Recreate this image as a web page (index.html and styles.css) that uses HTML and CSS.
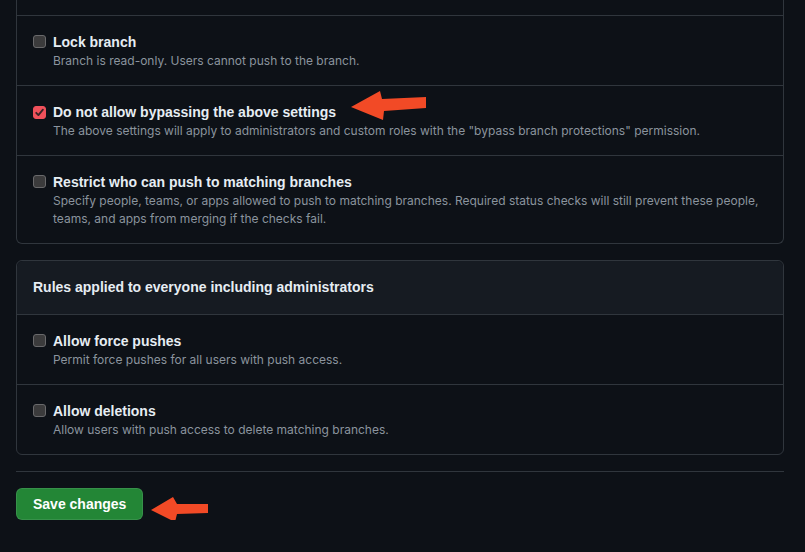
FILE: index.html
```html
<!DOCTYPE html>
<html lang="en">
<head>
<meta charset="utf-8">
<title>Branch protection</title>
<link rel="stylesheet" href="styles.css">
</head>
<body>
<main class="page">
  <section class="box box-cut">
    <div class="row row-tail"></div>
    <div class="row">
      <span class="cb"></span>
      <div class="opt">
        <div class="opt-title">Lock branch</div>
        <div class="opt-desc">Branch is read-only. Users cannot push to the branch.</div>
      </div>
    </div>
    <div class="row">
      <span class="cb cb-on"><svg viewBox="0 0 13 13" width="13" height="13"><path d="M3.2 6.8 L5.4 9.1 L9.9 3.6" fill="none" stroke="#3a2326" stroke-width="1.8" stroke-linecap="round" stroke-linejoin="round"/></svg></span>
      <div class="opt">
        <div class="opt-title">Do not allow bypassing the above settings</div>
        <div class="opt-desc">The above settings will apply to administrators and custom roles with the "bypass branch protections" permission.</div>
      </div>
    </div>
    <div class="row">
      <span class="cb"></span>
      <div class="opt">
        <div class="opt-title">Restrict who can push to matching branches</div>
        <div class="opt-desc">Specify people, teams, or apps allowed to push to matching branches. Required status checks will still prevent these people, teams, and apps from merging if the checks fail.</div>
      </div>
    </div>
  </section>

  <section class="box">
    <header class="box-head">Rules applied to everyone including administrators</header>
    <div class="row">
      <span class="cb"></span>
      <div class="opt">
        <div class="opt-title">Allow force pushes</div>
        <div class="opt-desc">Permit force pushes for all users with push access.</div>
      </div>
    </div>
    <div class="row">
      <span class="cb"></span>
      <div class="opt">
        <div class="opt-title">Allow deletions</div>
        <div class="opt-desc">Allow users with push access to delete matching branches.</div>
      </div>
    </div>
  </section>

  <hr class="sep">

  <div class="actions">
    <button class="btn-primary" type="button">Save changes</button>
  </div>

  <svg class="arrow arrow-1" width="80" height="32" viewBox="0 0 80 32"><polygon points="0,16 29,0 31,8 75,6 75,17 33,20 32,29" fill="#f24a26"/></svg>
  <svg class="arrow arrow-2" width="60" height="26" viewBox="0 0 60 26"><polygon points="0,13 22,0 26,7 57,7 57,16 26,17 24,25" fill="#f24a26"/></svg>
</main>
</body>
</html>
```

FILE: styles.css
```css
* { box-sizing: border-box; }
html, body {
  margin: 0;
  background: #0d1117;
}
body {
  font-family: "Liberation Sans", Arial, sans-serif;
  color: #e6edf3;
  font-size: 14px;
}
.page {
  position: relative;
  width: 768px;
  margin-left: 16px;
}
.box {
  border: 1px solid #30363d;
  border-radius: 6px;
  margin-bottom: 16px;
}
.box-cut {
  border-top: none;
  border-top-left-radius: 0;
  border-top-right-radius: 0;
}
.row {
  display: flex;
  align-items: flex-start;
  gap: 7px;
  padding: 16px 16px 15px;
  border-top: 1px solid #30363d;
}
.row:first-child { border-top: none; }
.row-tail {
  height: 15px;
  padding: 0;
}
.cb {
  flex: none;
  width: 13px;
  height: 13px;
  margin-top: 3px;
  border-radius: 3px;
  background: #3b3b3c;
  border: 1px solid #69696b;
  display: flex;
}
.cb-on {
  background: #f0515b;
  border-color: #f0515b;
  margin-top: 4px;
}
.cb-on svg { margin: -1px; }
.opt-title {
  font-weight: 700;
  font-size: 14px;
  line-height: 20px;
  color: #e6edf3;
}
.opt-desc {
  font-family: Inter, "Liberation Sans", Arial, sans-serif;
  font-size: 12px;
  line-height: 18px;
  color: #8b949e;
}
.box-head {
  background: #161b22;
  padding: 16px;
  font-weight: 700;
  font-size: 14px;
  line-height: 21px;
  border-top-left-radius: 6px;
  border-top-right-radius: 6px;
}
.box-head + .row { border-top: 1px solid #30363d; }
.sep {
  border: none;
  border-top: 1px solid #30363d;
  margin: 0 0 16px;
  height: 0;
}
.actions { display: flex; }
.btn-primary {
  height: 32px;
  padding: 0 16px;
  border: 1px solid rgba(240, 246, 252, 0.1);
  border-radius: 6px;
  background: #238636;
  color: #ffffff;
  font-family: "Liberation Sans", Arial, sans-serif;
  font-weight: 700;
  font-size: 14px;
}
.arrow { position: absolute; }
.arrow-1 { left: 335px; top: 91px; }
.arrow-2 { left: 135px; top: 497px; }
```
